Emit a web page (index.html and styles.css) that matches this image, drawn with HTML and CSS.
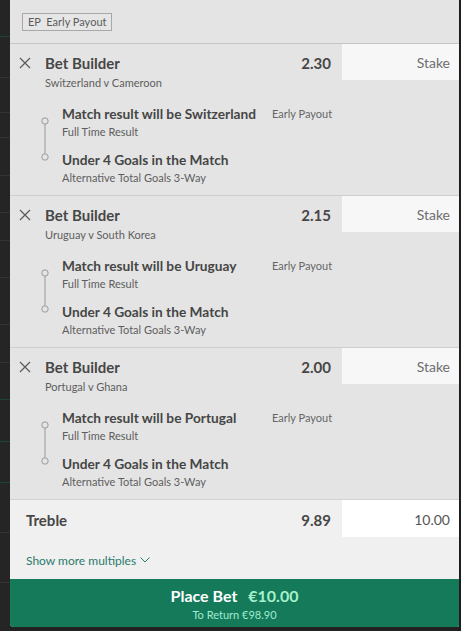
FILE: index.html
```html
<!DOCTYPE html>
<html>
<head>
<meta charset="utf-8">
<link rel="stylesheet" href="styles.css">
</head>
<body>
<div class="app">
  <div class="strip">
    <div class="seg g" style="height:37px"></div>
    <div class="seg" style="height:41px"></div>
    <div class="seg" style="height:35px"></div>
    <div class="seg" style="height:25px"></div>
    <div class="seg" style="height:38px"></div>
    <div class="seg" style="height:37px"></div>
    <div class="seg" style="height:28px"></div>
    <div class="seg" style="height:37px"></div>
    <div class="seg" style="height:47px"></div>
    <div class="seg" style="height:38px"></div>
    <div class="seg g" style="height:37px"></div>
    <div class="seg g" style="height:42px"></div>
    <div class="seg g" style="height:41px"></div>
    <div class="seg" style="height:50px"></div>
    <div class="seg" style="height:50px"></div>
  </div>
  <div class="panel">
    <div class="top">
      <span class="badge">EP&nbsp; Early Payout</span>
    </div>

    <div class="bet">
      <div class="bet-head">
        <svg class="close" width="12" height="12" viewBox="0 0 12 12"><path d="M1 1L11 11M11 1L1 11" stroke="#5a5a5a" stroke-width="1.2" fill="none"/></svg>
        <div class="info">
          <div class="title">Bet Builder</div>
          <div class="event">Switzerland v Cameroon</div>
        </div>
        <div class="odds">2.30</div>
        <div class="stake">Stake</div>
      </div>
      <div class="legs">
        <svg class="rail" width="10" height="44" viewBox="0 0 10 44"><circle cx="5" cy="4" r="3.2" stroke="#9a9a9a" stroke-width="1" fill="#e4e4e4"/><line x1="5" y1="7.2" x2="5" y2="36.8" stroke="#9a9a9a" stroke-width="1"/><circle cx="5" cy="40" r="3.2" stroke="#9a9a9a" stroke-width="1" fill="#e4e4e4"/></svg>
        <div class="leg-list">
          <div class="leg">
            <div class="leg-title">Match result will be Switzerland</div>
            <div class="ep">Early Payout</div>
            <div class="leg-sub">Full Time Result</div>
          </div>
          <div class="leg">
            <div class="leg-title">Under 4 Goals in the Match</div>
            <div class="leg-sub">Alternative Total Goals 3-Way</div>
          </div>
        </div>
      </div>
    </div>

    <div class="bet">
      <div class="bet-head">
        <svg class="close" width="12" height="12" viewBox="0 0 12 12"><path d="M1 1L11 11M11 1L1 11" stroke="#5a5a5a" stroke-width="1.2" fill="none"/></svg>
        <div class="info">
          <div class="title">Bet Builder</div>
          <div class="event">Uruguay v South Korea</div>
        </div>
        <div class="odds">2.15</div>
        <div class="stake">Stake</div>
      </div>
      <div class="legs">
        <svg class="rail" width="10" height="44" viewBox="0 0 10 44"><circle cx="5" cy="4" r="3.2" stroke="#9a9a9a" stroke-width="1" fill="#e4e4e4"/><line x1="5" y1="7.2" x2="5" y2="36.8" stroke="#9a9a9a" stroke-width="1"/><circle cx="5" cy="40" r="3.2" stroke="#9a9a9a" stroke-width="1" fill="#e4e4e4"/></svg>
        <div class="leg-list">
          <div class="leg">
            <div class="leg-title">Match result will be Uruguay</div>
            <div class="ep">Early Payout</div>
            <div class="leg-sub">Full Time Result</div>
          </div>
          <div class="leg">
            <div class="leg-title">Under 4 Goals in the Match</div>
            <div class="leg-sub">Alternative Total Goals 3-Way</div>
          </div>
        </div>
      </div>
    </div>

    <div class="bet">
      <div class="bet-head">
        <svg class="close" width="12" height="12" viewBox="0 0 12 12"><path d="M1 1L11 11M11 1L1 11" stroke="#5a5a5a" stroke-width="1.2" fill="none"/></svg>
        <div class="info">
          <div class="title">Bet Builder</div>
          <div class="event">Portugal v Ghana</div>
        </div>
        <div class="odds">2.00</div>
        <div class="stake">Stake</div>
      </div>
      <div class="legs">
        <svg class="rail" width="10" height="44" viewBox="0 0 10 44"><circle cx="5" cy="4" r="3.2" stroke="#9a9a9a" stroke-width="1" fill="#e4e4e4"/><line x1="5" y1="7.2" x2="5" y2="36.8" stroke="#9a9a9a" stroke-width="1"/><circle cx="5" cy="40" r="3.2" stroke="#9a9a9a" stroke-width="1" fill="#e4e4e4"/></svg>
        <div class="leg-list">
          <div class="leg">
            <div class="leg-title">Match result will be Portugal</div>
            <div class="ep">Early Payout</div>
            <div class="leg-sub">Full Time Result</div>
          </div>
          <div class="leg">
            <div class="leg-title">Under 4 Goals in the Match</div>
            <div class="leg-sub">Alternative Total Goals 3-Way</div>
          </div>
        </div>
      </div>
    </div>

    <div class="multi">
      <div class="multi-row">
        <div class="multi-name">Treble</div>
        <div class="odds multi-odds">9.89</div>
        <div class="stake filled">10.00</div>
      </div>
      <div class="more">Show more multiples <svg width="10" height="6" viewBox="0 0 10 6"><path d="M0.5 0.5L5 5L9.5 0.5" stroke="#2b7a6c" stroke-width="1" fill="none"/></svg></div>
    </div>

    <div class="place">
      <div class="place-main">Place Bet <span class="amount">€10.00</span></div>
      <div class="place-sub">To Return €98.90</div>
    </div>
  </div>
  <div class="edge"></div>
</div>
</body>
</html>
```

FILE: styles.css
```css
html, body {
  margin: 0;
  padding: 0;
  background: #222222;
}
body {
  font-family: Lato, "Open Sans", "Liberation Sans", sans-serif;
  color: #444;
}
.app {
  display: flex;
  width: 461px;
  height: 631px;
  overflow: hidden;
}
.strip {
  width: 10px;
  flex: none;
  display: flex;
  flex-direction: column;
  background: #252525;
}
.seg {
  flex: none;
  box-sizing: border-box;
  border-bottom: 1px solid #333333;
}
.seg.g {
  border-bottom-color: #1b4637;
}
.panel {
  width: 449px;
  flex: none;
  height: 627px;
  background: #e4e4e4;
  border-bottom-left-radius: 4px;
  border-bottom-right-radius: 2px;
  overflow: hidden;
  display: flex;
  flex-direction: column;
}
.edge {
  width: 2px;
  flex: none;
  background: #1e1e1e;
}
.top {
  display: flex;
  align-items: flex-start;
  height: 30px;
  border-bottom: 1px solid #c6c6c6;
  padding: 13px 0 0 12px;
}
.badge {
  display: block;
  box-sizing: border-box;
  height: 18px;
  line-height: 16px;
  border: 1px solid #a8a8a8;
  padding: 0 5px 0 5px;
  font-size: 11px;
  color: #5a5a5a;
  background: #e6e6e6;
}
.bet {
  height: 151px;
  border-bottom: 1px solid #cfcfcf;
}
.bet-head {
  display: flex;
  align-items: flex-start;
}
.close {
  flex: none;
  margin: 13px 0 0 9px;
}
.info {
  flex: 1;
  padding: 10px 0 0 14px;
}
.title {
  font-size: 15px;
  font-weight: 700;
  line-height: 19px;
  color: #464646;
}
.event {
  font-size: 11px;
  line-height: 14px;
  margin-top: 3px;
  color: #5e5e5e;
}
.odds {
  padding: 10px 11px 0 0;
  font-size: 15px;
  font-weight: 700;
  line-height: 19px;
  color: #464646;
}
.stake {
  flex: none;
  width: 117px;
  height: 36px;
  box-sizing: border-box;
  background: #f7f7f7;
  text-align: right;
  padding-right: 9px;
  line-height: 37px;
  font-size: 14px;
  color: #6e6e6e;
}
.legs {
  display: flex;
  align-items: flex-start;
  padding: 15px 0 0 30px;
}
.rail {
  flex: none;
  margin-top: 12px;
}
.leg-list {
  padding-left: 12px;
}
.leg {
  display: grid;
  grid-template-columns: 210px auto;
  margin-bottom: 12px;
}
.leg-title {
  font-size: 13.7px;
  font-weight: 700;
  line-height: 18px;
  color: #464646;
}
.ep {
  font-size: 11px;
  line-height: 18px;
  color: #666;
}
.leg-sub {
  grid-column: 1 / 3;
  font-size: 11px;
  line-height: 14px;
  margin-top: 2px;
  color: #5e5e5e;
}
.multi {
  flex: 1;
  background: #f0f0f0;
  border-top: 1px solid #d2d2d2;
  margin-top: -1px;
}
.multi-row {
  display: flex;
  align-items: flex-start;
}
.multi-name {
  flex: 1;
  padding: 11px 0 0 16px;
  font-size: 15px;
  font-weight: 700;
  line-height: 18px;
  color: #464646;
}
.multi-odds {
  padding-top: 11px;
  line-height: 18px;
}
.stake.filled {
  background: #ffffff;
  height: 37px;
  line-height: 39px;
  color: #555;
}
.more {
  padding: 16px 0 0 16px;
  font-size: 12px;
  line-height: 16px;
  color: #2b7a6c;
}
.more svg {
  margin-left: 1px;
  vertical-align: 2px;
}
.place {
  height: 48px;
  flex: none;
  background: #147a5a;
  text-align: center;
  padding-top: 7px;
  box-sizing: border-box;
}
.place-main {
  font-size: 16px;
  font-weight: 700;
  line-height: 20px;
  color: #ffffff;
}
.amount {
  margin-left: 7px;
  color: #a6f2cc;
}
.place-sub {
  font-size: 11px;
  line-height: 14px;
  margin-top: 2px;
  color: #a0ebd2;
}
```
